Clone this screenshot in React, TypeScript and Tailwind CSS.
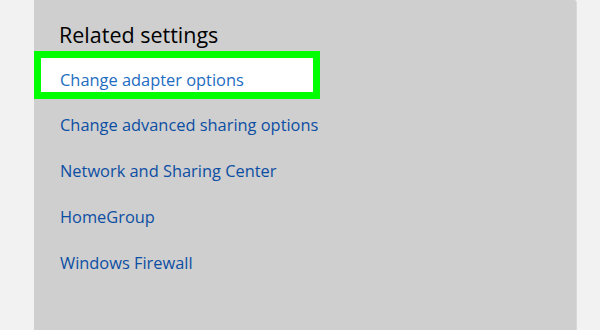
export default function App() {
  const links = [
    "Change advanced sharing options",
    "Network and Sharing Center",
    "HomeGroup",
    "Windows Firewall",
  ]

  return (
    <div className="w-[600px] h-[330px] bg-[#f2f2f2] pl-[34px] pr-[23px] overflow-hidden" style={{ fontFamily: '"Open Sans", sans-serif' }}>
      <div className="h-full bg-[#cfcfcf] rounded-tr-[3px] border-r border-[#d9d9d9]">
        {/* Header */}
        <h2 className="pl-[25px] pt-[20px] h-[51px] text-[21.5px] leading-[30px] text-black">Related settings</h2>

        {/* Highlighted link */}
        <div className="w-[286px] h-[48px] border-[7px] border-[#00ff00] bg-white flex items-center pl-[19px] pt-[9px]">
          <a className="text-[16.4px] leading-[24px] text-[#1d6cbf]">Change adapter options</a>
        </div>

        {/* Other links */}
        <div className="flex flex-col pl-[26px] pt-[14px] gap-[22px]">
          {links.map((l) => (
            <a key={l} className="text-[16.4px] leading-[24px] text-[#0c4ea3]">
              {l}
            </a>
          ))}
        </div>
      </div>
    </div>
  )
}
